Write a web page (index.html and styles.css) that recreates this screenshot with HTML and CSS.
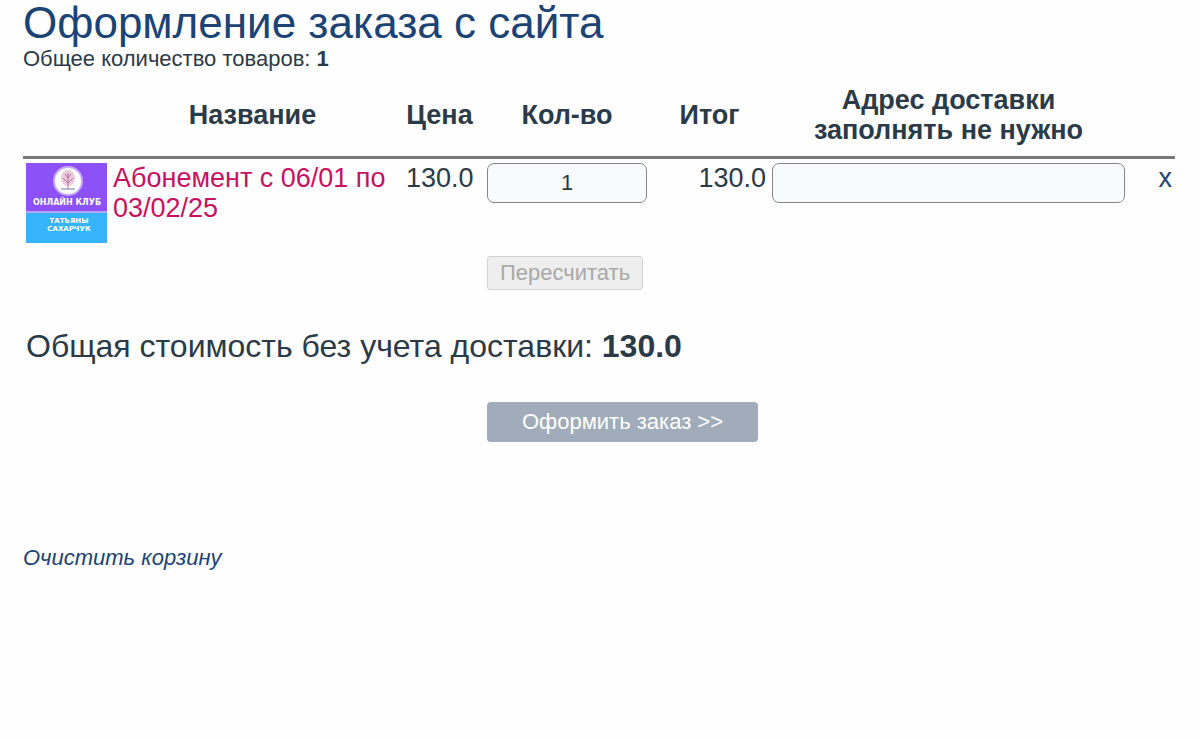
FILE: index.html
```html
<!DOCTYPE html>
<html lang="ru">
<head>
  <meta charset="UTF-8">
  <meta name="viewport" content="width=device-width, initial-scale=1.0">
  <title>Оформление заказа с сайта</title>
  <link rel="stylesheet" href="styles.css">
</head>
<body>
  <h1>Оформление заказа с сайта</h1>
  <p class="count">Общее количество товаров: <b>1</b></p>
  <form class="cart-form">
    <table class="cart">
      <colgroup>
        <col class="col-image">
        <col class="col-name">
        <col class="col-price">
        <col class="col-qty">
        <col class="col-sum">
        <col>
        <col class="col-remove">
      </colgroup>
      <thead>
        <tr>
          <th></th>
          <th class="name">Название</th>
          <th>Цена</th>
          <th>Кол-во</th>
          <th class="sum">Итог</th>
          <th id="address-head">Адрес доставки<br>заполнять не нужно</th>
          <th></th>
        </tr>
      </thead>
      <tbody>
        <tr class="item">
          <td>
            <svg class="picture" viewBox="0 0 81 80" role="img" aria-label="Онлайн клуб">
              <rect width="81" height="48" fill="#8c52f8"/>
              <rect y="48" width="81" height="2" fill="#b9a5f8"/>
              <rect y="50" width="81" height="30" fill="#35b4fb"/>
              <circle cx="42" cy="18" r="15" fill="#c9acfc"/>
              <circle cx="42" cy="18" r="13" fill="#fff"/>
              <ellipse cx="42" cy="15" rx="7" ry="8" fill="#edc9dc"/>
              <path d="M42 26V10M42 20l-5-5M42 20l5-5M42 15l-3-4M42 15l3-4" fill="none" stroke="#b0769c" stroke-width="1"/>
              <path d="M35 26h14" stroke="#667aa9" stroke-width="1"/>
              <text class="club" x="41" y="42">ОНЛАЙН КЛУБ</text>
              <text class="owner" x="43" y="60">ТАТЬЯНЫ</text>
              <text class="owner" x="43" y="68">САХАРЧУК</text>
            </svg>
          </td>
          <td><a class="product" href="#">Абонемент с 06/01 по 03/02/25</a></td>
          <td class="price">130.0</td>
          <td class="center"><input class="field qty" type="text" value="1" aria-label="Кол-во"></td>
          <td class="price">130.0</td>
          <td><input class="field" type="text" aria-labelledby="address-head"></td>
          <td class="remove"><a href="#">x</a></td>
        </tr>
        <tr class="recount-row">
          <td colspan="3"></td>
          <td class="action" colspan="4"><button class="recount" type="button" disabled>Пересчитать</button></td>
        </tr>
        <tr>
          <td class="total" colspan="7">Общая стоимость без учета доставки: <b>130.0</b></td>
        </tr>
        <tr>
          <td colspan="3"></td>
          <td class="action" colspan="4"><button class="order" type="submit">Оформить заказ &gt;&gt;</button></td>
        </tr>
      </tbody>
    </table>
  </form>
  <a class="clear" href="#">Очистить корзину</a>
</body>
</html>
```

FILE: styles.css
```css
body {
  margin: 0 25px 0 23px;
  font-family: Arial, "Liberation Sans", sans-serif;
  font-size: 22px;
  color: #2b3a47;
  background-color: #fefefe;
}

h1 {
  margin: 0;
  font-size: 44px;
  line-height: 46px;
  font-weight: normal;
  color: #1b4374;
}

a {
  color: #1b4374;
  text-decoration: none;
}

.count {
  margin: 0 0 13px;
  line-height: 26px;
}

.cart {
  width: 100%;
  table-layout: fixed;
  border-collapse: collapse;
  font-size: 27px;
  line-height: 30px;
}

.col-image {
  width: 87px;
}
.col-name {
  width: 293px;
}
.col-price {
  width: 73px;
}
.col-qty {
  width: 182px;
}
.col-sum {
  width: 111px;
}
.col-remove {
  width: 47px;
}

.cart th {
  padding: 0 0 11px;
  border-bottom: 3px solid #777;
}
.cart th.name {
  padding-right: 8px;
}
.cart th.sum {
  padding-right: 8px;
}

.cart td {
  padding: 4px 3px 0;
  vertical-align: top;
}

.picture {
  display: block;
  width: 81px;
  height: 80px;
}
.picture text {
  fill: #fff;
  font-family: "DejaVu Sans", sans-serif;
  font-weight: bold;
  text-anchor: middle;
}
.picture .club {
  font-size: 8px;
}
.picture .owner {
  font-size: 7px;
}

.product {
  color: #c8115f;
}

.cart .price,
.cart .remove {
  text-align: right;
}

.cart .center {
  text-align: center;
}

.field {
  display: block;
  box-sizing: border-box;
  width: 100%;
  height: 40px;
  padding: 0 8px;
  border: 1px solid #858585;
  border-radius: 7px;
  background-color: #f8fbfc;
  font: 22px Arial, "Liberation Sans", sans-serif;
  color: #2b3a47;
}
.qty {
  width: 160px;
  margin: 0 auto;
  text-align: center;
}

.cart .action {
  padding: 13px 0 0 11px;
}

.recount,
.order {
  display: block;
  font: 22px Arial, "Liberation Sans", sans-serif;
}
.recount {
  height: 34px;
  padding: 0 12px;
  border: 1px solid #d2d2d2;
  border-radius: 3px;
  background-color: #eee;
  color: #a9a9a9;
}
.order {
  height: 40px;
  padding: 0 35px;
  border: none;
  border-radius: 4px;
  background-color: #a0acba;
  color: #fff;
}

.cart .total {
  padding: 36px 3px 23px;
  font-size: 32px;
  line-height: 40px;
}

.clear {
  display: inline-block;
  margin-top: 103px;
  line-height: 26px;
  font-style: italic;
}
```
